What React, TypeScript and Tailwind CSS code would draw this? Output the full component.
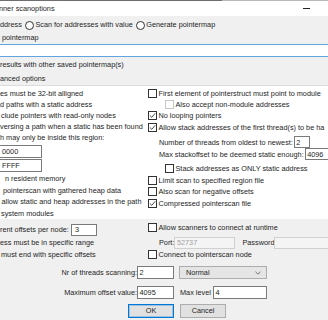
import React from "react";

type CheckProps = { on?: boolean; dim?: boolean };

const Check = ({ on = false, dim = false }: CheckProps) => (
  <span
    className={`flex h-[9px] w-[9px] shrink-0 items-center justify-center border bg-white ${
      dim ? "border-[#c6c6c6]" : "border-[#333333]"
    }`}
  >
    {on && (
      <svg width="7" height="7" viewBox="0 0 7 7">
        <path d="M0.9 3.5 L2.8 5.3 L6.2 1.3" fill="none" stroke="#333" strokeWidth="0.9" />
      </svg>
    )}
  </span>
);

const Radio = ({ className = "" }: { className?: string }) => (
  <span className={`block h-[9px] w-[9px] shrink-0 rounded-full border border-[#333333] bg-white ${className}`} />
);

type RowProps = { label: string; on?: boolean; dim?: boolean; indent?: boolean; h: string; mt?: string };

const CbRow = ({ label, on, dim, indent, h, mt = "" }: RowProps) => (
  <div className={`flex items-center whitespace-nowrap ${h} ${mt} ${indent ? "pl-[17px]" : ""}`}>
    <Check on={on} dim={dim} />
    <span className="ml-[1.5px]">{label}</span>
  </div>
);

type EditProps = { value?: string; className: string; muted?: boolean };

const Edit = ({ value = "", className, muted }: EditProps) => (
  <div
    className={`flex shrink-0 items-center border pl-[1.5px] ${
      muted ? "border-[#d0d0d0] bg-[#f4f4f4] text-[#a3a3a3]" : "border-[#7a7a7a] bg-white"
    } ${className}`}
  >
    {value}
  </div>
);

const Line = ({ text, h, cls = "" }: { text: string; h: string; cls?: string }) => (
  <div className={`flex items-center whitespace-nowrap ${h} ${cls}`}>{text}</div>
);

export default function App() {
  return (
    <div className="flex h-[320px] w-[328px] flex-col overflow-hidden bg-[#f0f0f0] font-['Liberation_Sans',Arial,sans-serif] text-[7.3px] leading-none text-[#1e1e1e]">
      {/* window edge */}
      <div className="flex h-px shrink-0">
        <div className="w-[222px] bg-[#6e6e6e]" />
        <div className="flex-1 bg-[#b8b8b8]" />
      </div>

      {/* title bar */}
      <div className="flex h-[15px] shrink-0 items-center justify-between bg-white pr-[18px]">
        <span className="-ml-[1px]">nner scanoptions</span>
        <span className="h-px w-[7px] bg-[#222]" />
      </div>

      {/* scan mode */}
      <div className="mt-[3px] flex h-[12px] shrink-0 items-center whitespace-nowrap">
        <span>ddress</span>
        <Radio className="ml-[3px]" />
        <span className="ml-[1.5px]">Scan for addresses with value</span>
        <Radio className="ml-[3px]" />
        <span className="ml-[1.5px]">Generate pointermap</span>
      </div>

      <Line text="pointermap" h="h-[11px]" cls="pl-[2px] mt-[1.5px]" />
      <div className="h-[13px] shrink-0 border-y border-[#62a3e2] bg-white" />

      <Line text="results with other saved pointermap(s)" h="h-[11px]" cls="mt-[2.5px]" />
      <Line text="anced options" h="h-[11px]" cls="mt-[3px]" />

      {/* advanced options sheet */}
      <div className="mt-[1px] flex h-[134px] shrink-0 border-t border-[#dcdcdc] bg-white">
        <div className="flex w-[148px] shrink-0 flex-col pt-[2px]">
          <Line text="es must be 32-bit alligned" h="h-[11.2px]" />
          <Line text="d paths with a static address" h="h-[11.2px]" />
          <Line text="clude pointers with read-only nodes" h="h-[11.2px]" cls="pl-[1px]" />
          <Line text="versing a path when a static has been found" h="h-[11.2px]" />
          <Line text="h may only be inside this region:" h="h-[11.2px]" />
          <Edit value="0000" className="mt-[1.5px] -ml-[2px] h-[13px] w-[44px] pl-[3px]" />
          <Edit value="FFFF" className="mt-[1.5px] -ml-[2px] h-[13px] w-[44px] pl-[3px]" />
          <Line text="n resident memory" h="h-[11.6px]" cls="mt-[0.5px] pl-[5px]" />
          <Line text="pointerscan with gathered heap data" h="h-[11.6px]" cls="pl-[3px]" />
          <Line text="allow static and heap addresses in the path" h="h-[11.6px]" cls="pl-[1.5px]" />
          <Line text="system modules" h="h-[11.6px]" cls="pl-[1px]" />
        </div>

        <div className="flex min-w-0 flex-1 flex-col pt-[2px]">
          <CbRow label="First element of pointerstruct must point to module" h="h-[11.2px]" />
          <CbRow label="Also accept non-module addresses" dim indent h="h-[11.2px]" />
          <CbRow label="No looping pointers" on h="h-[11.2px]" />
          <CbRow label="Allow stack addresses of the first thread(s) to be ha" on h="h-[11.2px]" />
          <div className="mt-[3.7px] flex h-[12px] items-center whitespace-nowrap pl-[11px]">
            <span>Number of threads from oldest to newest:</span>
            <Edit value="2" className="ml-[1px] h-[12px] w-[16px]" />
          </div>
          <div className="flex h-[12px] items-center whitespace-nowrap pl-[11px]">
            <span>Max stackoffset to be deemed static enough:</span>
            <Edit value="4096" className="ml-[1px] h-[12px] w-[34px]" />
          </div>
          <CbRow label="Stack addresses as ONLY static address" indent h="h-[11.2px]" mt="mt-[2.9px]" />
          <CbRow label="Limit scan to specified region file" h="h-[11.6px]" />
          <CbRow label="Also scan for negative offsets" h="h-[11.6px]" />
          <CbRow label="Compressed pointerscan file" on h="h-[11.6px]" />
        </div>
      </div>

      {/* distributed scanning / offsets */}
      <div className="flex shrink-0">
        <div className="flex w-[148px] shrink-0 flex-col">
          <div className="mt-[5px] flex h-[12px] items-center whitespace-nowrap">
            <span className="w-[71px]">rent offsets per node:</span>
            <Edit value="3" className="h-[12px] w-[26px] pl-[3px]" />
          </div>
          <Line text="ess must be in specific range" h="h-[11.6px]" cls="mt-[1.2px]" />
          <Line text="must end with specific offsets" h="h-[11.6px]" cls="mt-[0.4px] pl-[1px]" />
        </div>
        <div className="flex min-w-0 flex-1 flex-col">
          <CbRow label="Allow scanners to connect at runtime" h="h-[11.2px]" mt="mt-[3.4px]" />
          <div className="mt-[3.6px] flex h-[11.5px] items-center whitespace-nowrap pl-[11px]">
            <span className="w-[17px]">Port:</span>
            <Edit value="52737" muted className="h-[11.5px] w-[61px]" />
            <span className="ml-[7px] w-[35px]">Password</span>
            <Edit muted className="h-[11.5px] w-[60px]" />
          </div>
          <CbRow label="Connect to pointerscan node" h="h-[11.2px]" mt="mt-[0.6px]" />
        </div>
      </div>

      {/* threads */}
      <div className="mt-[5.5px] flex h-[12.5px] shrink-0 items-center whitespace-nowrap">
        <span className="w-[137px] text-right">Nr of threads scanning:</span>
        <Edit value="2" className="h-[12.5px] w-[37px]" />
        <div className="ml-[5px] flex h-[13px] w-[88px] items-center justify-between border border-[#adadad] bg-[#e5e5e5] pl-[6px] pr-[5px]">
          <span>Normal</span>
          <svg width="6" height="4" viewBox="0 0 6 4">
            <path d="M0.5 0.8 L3 3.2 L5.5 0.8" fill="none" stroke="#555" strokeWidth="0.8" />
          </svg>
        </div>
      </div>

      <div className="mt-[7.5px] flex h-[12.5px] shrink-0 items-center whitespace-nowrap">
        <span className="w-[137px] text-right">Maximum offset value:</span>
        <Edit value="4095" className="h-[12.5px] w-[37px]" />
        <span className="ml-[6px] w-[33px]">Max level</span>
        <Edit value="4" className="h-[12.5px] w-[54px]" />
      </div>

      {/* buttons */}
      <div className="mt-[5px] flex h-[14px] shrink-0 pl-[128px]">
        <button className="flex h-[14px] w-[46px] items-center justify-center border border-[#0078d7] bg-[#e1e1e1] outline outline-1 -outline-offset-2 outline-[#0078d7]/30">
          OK
        </button>
        <button className="ml-[6px] flex h-[14px] w-[46px] items-center justify-center border border-[#adadad] bg-[#e1e1e1]">
          Cancel
        </button>
      </div>
    </div>
  );
}
